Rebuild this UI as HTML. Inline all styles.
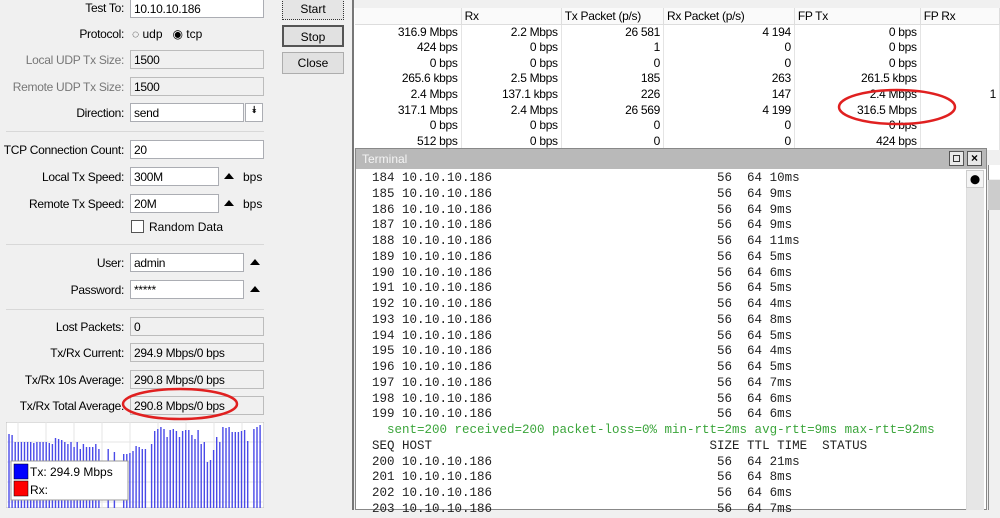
<!DOCTYPE html><html><head><style>
*{margin:0;padding:0;box-sizing:border-box}
body{width:1000px;height:510px;overflow:hidden;background:#f0f0f0;font-family:"Liberation Sans",sans-serif;font-size:12px;color:#000;position:relative}
.a{position:absolute}
.lbl{position:absolute;text-align:right;width:124px;left:0;font-size:12px;letter-spacing:-0.3px}
.gr{color:#777}
.in{position:absolute;height:19px;border:1px solid #abadb3;background:#fff;padding:2px 3px;font-size:12px;letter-spacing:-0.3px}
.ro{background:#f0f0f0;border-color:#bcbcbc}
.btn{position:absolute;left:282px;width:62px;height:22px;border:1px solid #adadad;background:#e1e1e1;text-align:center;line-height:20px;font-size:12px}
.sep{position:absolute;left:6px;width:258px;height:1px;background:#d8d8d8}
.tri{position:absolute;width:0;height:0;border-left:5px solid transparent;border-right:5px solid transparent;border-bottom:6px solid #000}
table{border-collapse:collapse;position:absolute;left:355px;top:8px;background:#fff;font-size:12px;letter-spacing:-0.3px}
td{height:15.7px;padding:0 3px;text-align:right;border-right:1px solid #e4e4e4;line-height:15px}
th{height:16px;font-weight:normal;text-align:left;padding:0 3px;border-right:1px solid #ddd;border-bottom:1px solid #ddd;background:#fafafa}
.term{position:absolute;left:355px;top:148px;width:632px;height:362px;border:1px solid #888;background:#fff}
.tb{height:20px;background:#b9b9b9;color:#f4f4f4;padding:3px 6px;font-size:12px}
pre{position:absolute;left:16px;top:22px;font-family:"Liberation Mono",monospace;font-size:12.5px;line-height:15.75px;color:#222}
.g{color:#3ba53b}
</style></head><body>
<div class="lbl" style="top:1px">Test To:</div><div class="in" style="left:130px;top:-1px;width:134px">10.10.10.186</div>
<div class="lbl" style="top:27px">Protocol:</div>
<div class="a" style="left:132px;top:27px">◌ udp &nbsp;&nbsp;◉ tcp</div>
<div class="lbl gr" style="top:53px">Local UDP Tx Size:</div><div class="in ro" style="left:130px;top:50px;width:134px">1500</div>
<div class="lbl gr" style="top:80px">Remote UDP Tx Size:</div><div class="in ro" style="left:130px;top:77px;width:134px">1500</div>
<div class="lbl" style="top:106px">Direction:</div><div class="in" style="left:130px;top:103px;width:114px">send</div>
<div class="in" style="left:245px;top:103px;width:18px;text-align:center;padding:1px;font-size:10px">⯯</div>
<div class="sep" style="top:131px"></div>
<div class="lbl" style="top:143px">TCP Connection Count:</div><div class="in" style="left:130px;top:140px;width:134px">20</div>
<div class="lbl" style="top:170px">Local Tx Speed:</div><div class="in" style="left:130px;top:167px;width:89px">300M</div>
<div class="tri" style="left:224px;top:173px"></div><div class="a" style="left:243px;top:170px">bps</div>
<div class="lbl" style="top:197px">Remote Tx Speed:</div><div class="in" style="left:130px;top:194px;width:89px">20M</div>
<div class="tri" style="left:224px;top:200px"></div><div class="a" style="left:243px;top:197px">bps</div>
<div class="a" style="left:131px;top:220px;width:13px;height:13px;border:1px solid #555;background:#fff"></div>
<div class="a" style="left:149px;top:220px">Random Data</div>
<div class="sep" style="top:244px"></div>
<div class="lbl" style="top:256px">User:</div><div class="in" style="left:130px;top:253px;width:114px">admin</div>
<div class="tri" style="left:250px;top:259px"></div>
<div class="lbl" style="top:283px">Password:</div><div class="in" style="left:130px;top:280px;width:114px">*****</div>
<div class="tri" style="left:250px;top:286px"></div>
<div class="sep" style="top:309px"></div>
<div class="lbl" style="top:320px">Lost Packets:</div><div class="in ro" style="left:130px;top:317px;width:134px">0</div>
<div class="lbl" style="top:346px">Tx/Rx Current:</div><div class="in ro" style="left:130px;top:343px;width:134px">294.9 Mbps/0 bps</div>
<div class="lbl" style="top:373px">Tx/Rx 10s Average:</div><div class="in ro" style="left:130px;top:370px;width:134px">290.8 Mbps/0 bps</div>
<div class="lbl" style="top:399px">Tx/Rx Total Average:</div><div class="in ro" style="left:130px;top:396px;width:134px">290.8 Mbps/0 bps</div>
<svg class="a" style="left:120px;top:384px" width="125" height="40"><ellipse cx="60" cy="20" rx="57" ry="15" fill="none" stroke="#e02020" stroke-width="2.5"/></svg>
<svg class="a" style="left:6px;top:422px" width="258" height="86">
<rect x="0" y="0" width="258" height="86" fill="#fff" stroke="#bbb"/>
<g stroke="#e4e4e4">
<path d="M0 20H258M0 40H258M0 60H258M0 80H258"/>
<path d="M12 0V86M40 0V86M68 0V86M96 0V86M124 0V86M152 0V86M180 0V86M208 0V86M236 0V86"/>
</g>
<g stroke="#4a4ae8" stroke-width="1.4" id="bars"></g>
<rect x="5" y="39" width="117" height="39" fill="#fff" stroke="#999"/>
<rect x="8" y="42" width="14" height="15" fill="#0000ff" stroke="#000" stroke-width=".5"/>
<rect x="8" y="59" width="14" height="15" fill="#ff0000" stroke="#000" stroke-width=".5"/>
<text x="24" y="54" font-size="12" font-family="Liberation Sans">Tx:  294.9 Mbps</text>
<text x="24" y="72" font-size="12" font-family="Liberation Sans">Rx:</text>
</svg>
<script>
var hh=[12,13,20,20,20,20,20,20,21,20,20,20,20,21,22,16,17,18,20,22,20,25,20,27,22,25,25,25,22,27,86,86,27,86,30,86,86,32,32,31,29,24,25,27,27,86,22,9,7,5,7,15,8,7,9,15,9,8,8,13,17,8,22,20,40,38,28,15,20,5,6,5,10,10,10,9,8,19,86,7,5,3];
var s='';for(var i=0;i<hh.length;i++){var x=3+i*3.1;s+='<line x1="'+x+'" y1="'+hh[i]+'" x2="'+x+'" y2="86"/>';}
document.getElementById('bars').innerHTML=s;
</script>
<div class="btn" style="top:-2px;border:1px dotted #333;background:#e5e5e5">Start</div>
<div class="btn" style="top:25px;border:2px solid #555">Stop</div>
<div class="btn" style="top:52px">Close</div>
<div class="a" style="left:352px;top:0;width:2px;height:510px;background:#777"></div>
<div class="a" style="left:354px;top:0;width:646px;height:148px;background:#fff"></div>
<div class="a" style="left:354px;top:0;width:646px;height:8px;background:#f0f0f0"></div>
<table>
<tr><th style="width:107px"></th><th style="width:101px">Rx</th><th style="width:103px">Tx Packet (p/s)</th><th style="width:132px">Rx Packet (p/s)</th><th style="width:127px">FP Tx</th><th style="width:80px">FP Rx</th></tr>
<tr><td>316.9 Mbps</td><td>2.2 Mbps</td><td>26 581</td><td>4 194</td><td>0 bps</td><td></td></tr>
<tr><td>424 bps</td><td>0 bps</td><td>1</td><td>0</td><td>0 bps</td><td></td></tr>
<tr><td>0 bps</td><td>0 bps</td><td>0</td><td>0</td><td>0 bps</td><td></td></tr>
<tr><td>265.6 kbps</td><td>2.5 Mbps</td><td>185</td><td>263</td><td>261.5 kbps</td><td></td></tr>
<tr><td>2.4 Mbps</td><td>137.1 kbps</td><td>226</td><td>147</td><td>2.4 Mbps</td><td>1</td></tr>
<tr><td>317.1 Mbps</td><td>2.4 Mbps</td><td>26 569</td><td>4 199</td><td>316.5 Mbps</td><td></td></tr>
<tr><td>0 bps</td><td>0 bps</td><td>0</td><td>0</td><td>0 bps</td><td></td></tr>
<tr><td>512 bps</td><td>0 bps</td><td>0</td><td>0</td><td>424 bps</td><td></td></tr>
</table>
<svg class="a" style="left:835px;top:85px" width="130" height="45"><ellipse cx="62" cy="22" rx="58" ry="17" fill="none" stroke="#e02020" stroke-width="2.5"/></svg>
<div class="a" style="left:988px;top:165px;width:12px;height:345px;background:#f0f0f0;border-left:1px solid #888"></div>
<div class="a" style="left:988px;top:165px;width:12px;height:14px;background:#fff;border-left:1px solid #888"></div>
<div class="a" style="left:988px;top:180px;width:12px;height:30px;background:#ccc"></div>
<div class="term">
<div class="tb">Terminal</div>
<div class="a" style="left:593px;top:2px;width:15px;height:15px;border:1px solid #555;background:#e8e8e8"><div style="margin:3px;width:7px;height:7px;border:1px solid #333"></div></div>
<div class="a" style="left:611px;top:2px;width:15px;height:15px;border:1px solid #555;background:#e8e8e8;font-size:12px;line-height:13px;text-align:center;font-weight:bold">×</div>
<div class="a" style="left:610px;top:21px;width:18px;height:340px;background:#e6e6e6;border-left:1px solid #ddd"></div>
<div class="a" style="left:610px;top:21px;width:18px;height:18px;background:#f4f4f4;border:1px solid #ccc;font-size:9px;text-align:center;line-height:16px">⬤</div>
<pre>184 10.10.10.186                              56  64 10ms
185 10.10.10.186                              56  64 9ms
186 10.10.10.186                              56  64 9ms
187 10.10.10.186                              56  64 9ms
188 10.10.10.186                              56  64 11ms
189 10.10.10.186                              56  64 5ms
190 10.10.10.186                              56  64 6ms
191 10.10.10.186                              56  64 5ms
192 10.10.10.186                              56  64 4ms
193 10.10.10.186                              56  64 8ms
194 10.10.10.186                              56  64 5ms
195 10.10.10.186                              56  64 4ms
196 10.10.10.186                              56  64 5ms
197 10.10.10.186                              56  64 7ms
198 10.10.10.186                              56  64 6ms
199 10.10.10.186                              56  64 6ms
<span class="g">  sent=200 received=200 packet-loss=0% min-rtt=2ms avg-rtt=9ms max-rtt=92ms</span>
SEQ HOST                                     SIZE TTL TIME  STATUS
200 10.10.10.186                              56  64 21ms
201 10.10.10.186                              56  64 8ms
202 10.10.10.186                              56  64 6ms
203 10.10.10.186                              56  64 7ms</pre>
</div>
</body></html>
